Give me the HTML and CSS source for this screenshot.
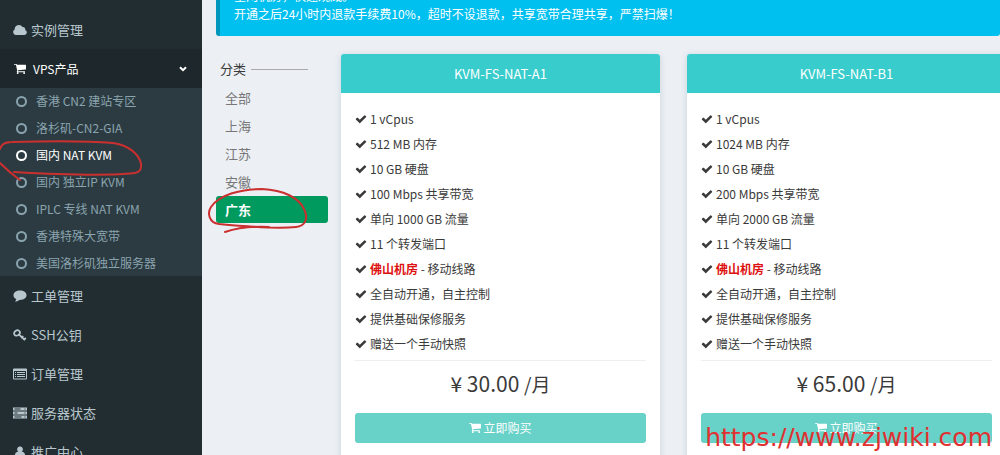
FILE: index.html
```html
<!DOCTYPE html>
<html lang="zh-CN">
<head>
<meta charset="utf-8">
<meta name="viewport" content="width=device-width, initial-scale=1">
<title>VPS产品</title>
<link rel="stylesheet" href="styles.css">
</head>
<body>
<svg class="defs" aria-hidden="true">
  <symbol id="check" viewBox="0 0 1792 1792"><path d="M1671 566q0 40-28 68l-724 724-136 136q-28 28-68 28t-68-28l-136-136-362-362q-28-28-28-68t28-68l136-136q28-28 68-28t68 28l294 295 656-657q28-28 68-28t68 28l136 136q28 28 28 68z"/></symbol>
  <symbol id="cart" viewBox="0 0 1664 1664"><path d="M640 1408q0 52-38 90t-90 38-90-38-38-90 38-90 90-38 90 38 38 90zm896 0q0 52-38 90t-90 38-90-38-38-90 38-90 90-38 90 38 38 90zm128-1088v512q0 24-16 42.500t-41 21.500l-1044 122q13 60 13 70 0 16-24 64h920q26 0 45 19t19 45-19 45-45 19h-1024q-26 0-45-19t-19-45q0-11 8-31.500t16-36 21.500-40 15.500-29.500l-177-823h-204q-26 0-45-19t-19-45 19-45 45-19h256q16 0 28.500 6.500t19.500 15.500 13 24.500 8 26 5.500 29.500 4.500 26h1201q26 0 45 19t19 45z"/></symbol>
  <symbol id="cloud" viewBox="0 0 14 12"><path d="M3 11A3 3 0 0 1 1.700 5.400 4.200 4.200 0 0 1 9.500 3 2.400 2.400 0 0 1 12.200 6 2.600 2.600 0 0 1 11.500 11Z"/></symbol>
  <symbol id="comment" viewBox="0 0 14 12"><path d="M7 .5c3.700 0 6.500 2 6.500 4.700S10.700 9.900 7 9.900h-.8C5 11 3.500 11.500 2 11.600c.8-.7 1.200-1.500 1.300-2.500C1.500 8.200.5 6.800.5 5.200.5 2.500 3.300.5 7 .5Z"/></symbol>
  <symbol id="key" viewBox="0 0 14 12"><g fill="none" stroke="currentColor" stroke-width="1.800"><ellipse cx="4" cy="4" rx="3" ry="2.500" transform="rotate(-35 4 4)"/><path d="M5.800 5.300 12 11.200M8.200 9.200l2-2.200M10.600 11.200l2.200-2.400"/></g></symbol>
  <symbol id="list" viewBox="0 0 14 12"><path fill-rule="evenodd" d="M1 .5h12a1 1 0 0 1 1 1v9a1 1 0 0 1-1 1H1a1 1 0 0 1-1-1v-9a1 1 0 0 1 1-1ZM1 3v7.500h12V3ZM2 4h1v1H2Zm2 0h8v1H4ZM2 6h1v1H2Zm2 0h8v1H4ZM2 8h1v1H2Zm2 0h8v1H4Z"/></symbol>
  <symbol id="server" viewBox="0 0 14 12"><path fill-rule="evenodd" d="M0 .5h14v3H0ZM1.500 1.500v1h6v-1ZM11.500 1.500v1h1v-1ZM0 4.500h14v3H0ZM1.500 5.500v1h3v-1ZM11.500 5.500v1h1v-1ZM0 8.500h14v3H0ZM1.500 9.500v1h7v-1ZM11.500 9.500v1h1v-1Z"/></symbol>
  <symbol id="user" viewBox="0 0 14 14"><path d="M7 .5a3 3.300 0 0 1 2 6c2.700.5 4 2 4 5.500 0 1-.7 1.500-1.500 1.500h-9C1.700 13.500 1 13 1 12c0-3.500 1.300-5 4-5.500a3 3.300 0 0 1 2-6Z"/></symbol>
</svg>

<div class="page">
  <nav class="sidebar" aria-label="主菜单">
    <ul class="menu">
      <li><a class="menu-link" href="#"><svg class="icon"><use href="#cloud"/></svg>实例管理</a></li>
      <li>
        <a class="menu-link open" href="#"><svg class="icon"><use href="#cart"/></svg>VPS产品
          <svg class="caret" viewBox="0 0 8 6"><path d="M1 1.200 4 4.200 7 1.200"/></svg></a>
        <ul class="submenu">
          <li><a class="sub-link" href="#">香港 CN2 建站专区</a></li>
          <li><a class="sub-link" href="#">洛杉矶-CN2-GIA</a></li>
          <li><a class="sub-link current" href="#" aria-current="page">国内 NAT KVM</a></li>
          <li><a class="sub-link" href="#">国内 独立IP KVM</a></li>
          <li><a class="sub-link" href="#">IPLC 专线 NAT KVM</a></li>
          <li><a class="sub-link" href="#">香港特殊大宽带</a></li>
          <li><a class="sub-link" href="#">美国洛杉矶独立服务器</a></li>
        </ul>
      </li>
      <li><a class="menu-link" href="#"><svg class="icon"><use href="#comment"/></svg>工单管理</a></li>
      <li><a class="menu-link" href="#"><svg class="icon"><use href="#key"/></svg>SSH公钥</a></li>
      <li><a class="menu-link" href="#"><svg class="icon"><use href="#list"/></svg>订单管理</a></li>
      <li><a class="menu-link" href="#"><svg class="icon"><use href="#server"/></svg>服务器状态</a></li>
      <li><a class="menu-link" href="#"><svg class="icon"><use href="#user"/></svg>推广中心</a></li>
    </ul>
  </nav>

  <main class="content">
    <div class="callout">
      <p>全网机房，快速观威。</p>
      <p>开通之后24小时内退款手续费10%，超时不设退款，共享宽带合理共享，严禁扫爆！</p>
    </div>
    <div class="columns">
      <aside class="filter">
        <h2 class="filter-title">分类</h2>
        <a class="filter-link" href="#">全部</a>
        <a class="filter-link" href="#">上海</a>
        <a class="filter-link" href="#">江苏</a>
        <a class="filter-link" href="#">安徽</a>
        <a class="filter-link selected" href="#">广东</a>
      </aside>
      <section class="plans">
        <article class="plan">
          <h3 class="plan-name">KVM-FS-NAT-A1</h3>
          <div class="plan-body">
            <ul class="features">
              <li><svg class="tick"><use href="#check"/></svg>1 vCpus</li>
              <li><svg class="tick"><use href="#check"/></svg>512 MB 内存</li>
              <li><svg class="tick"><use href="#check"/></svg>10 GB 硬盘</li>
              <li><svg class="tick"><use href="#check"/></svg>100 Mbps 共享带宽</li>
              <li><svg class="tick"><use href="#check"/></svg>单向 1000 GB 流量</li>
              <li><svg class="tick"><use href="#check"/></svg>11 个转发端口</li>
              <li><svg class="tick"><use href="#check"/></svg><span><strong>佛山机房</strong> - 移动线路</span></li>
              <li><svg class="tick"><use href="#check"/></svg>全自动开通，自主控制</li>
              <li><svg class="tick"><use href="#check"/></svg>提供基础保修服务</li>
              <li><svg class="tick"><use href="#check"/></svg>赠送一个手动快照</li>
            </ul>
            <p class="price">¥ 30.00 <span class="per">/月</span></p>
            <button class="buy" type="button"><svg class="buy-icon"><use href="#cart"/></svg>立即购买</button>
          </div>
        </article>
        <article class="plan">
          <h3 class="plan-name">KVM-FS-NAT-B1</h3>
          <div class="plan-body">
            <ul class="features">
              <li><svg class="tick"><use href="#check"/></svg>1 vCpus</li>
              <li><svg class="tick"><use href="#check"/></svg>1024 MB 内存</li>
              <li><svg class="tick"><use href="#check"/></svg>10 GB 硬盘</li>
              <li><svg class="tick"><use href="#check"/></svg>200 Mbps 共享带宽</li>
              <li><svg class="tick"><use href="#check"/></svg>单向 2000 GB 流量</li>
              <li><svg class="tick"><use href="#check"/></svg>11 个转发端口</li>
              <li><svg class="tick"><use href="#check"/></svg><span><strong>佛山机房</strong> - 移动线路</span></li>
              <li><svg class="tick"><use href="#check"/></svg>全自动开通，自主控制</li>
              <li><svg class="tick"><use href="#check"/></svg>提供基础保修服务</li>
              <li><svg class="tick"><use href="#check"/></svg>赠送一个手动快照</li>
            </ul>
            <p class="price">¥ 65.00 <span class="per">/月</span></p>
            <button class="buy" type="button"><svg class="buy-icon"><use href="#cart"/></svg>立即购买</button>
          </div>
        </article>
      </section>
    </div>
  </main>

  <svg class="marks" viewBox="0 0 340 240" aria-hidden="true">
    <path d="M0 149C1 145 5 142 12 142 45 141 90 141 113 143 127 145 139 153 141 164 142 171 138 173 130 173.500 100 176 50 174 14 172M0 163C6 169 13 175 20 180"/>
    <path d="M219 224C209 223 207 213 211 207 219 195 240 189 262 189 284 190 299 198 304 209 309 219 305 226 296 227 275 229 240 226 219 224M225 232C237 228 250 226 269 227"/>
  </svg>
  <p class="watermark">https://www.zjwiki.com</p>
</div>
</body>
</html>
```
FILE: styles.css
```css
* { box-sizing: border-box; }

body {
  margin: 0;
  background: #ecf0f5;
  color: #3a3a3a;
  font: 12px/18px "Noto Sans CJK SC", "Noto Sans", sans-serif;
}

a { color: inherit; text-decoration: none; }
p, h2, h3, ul { margin: 0; padding: 0; }
ul { list-style: none; }
svg { fill: currentColor; }
.defs { display: none; }

.page {
  position: relative;
  display: flex;
  height: 100vh;
  overflow: hidden;
}

/* Sidebar */
.sidebar {
  flex: 0 0 202px;
  padding-top: 10px;
  background: #222d32;
  color: #b8c7ce;
}

.menu-link {
  display: flex;
  align-items: center;
  gap: 4px;
  height: 39px;
  padding: 0 15px 0 13px;
  font-size: 13px;
}

.menu-link.open {
  gap: 6px;
  background: #1e282c;
  color: #fff;
  font-size: 12px;
}

.icon { width: 14px; height: 12px; }

.caret {
  width: 8px;
  height: 6px;
  margin-left: auto;
  fill: none;
  stroke: currentColor;
  stroke-width: 2;
}

.submenu {
  display: flex;
  flex-direction: column;
  gap: 1px;
  background: #2c3b41;
}

.sub-link {
  display: flex;
  align-items: center;
  gap: 9px;
  height: 26px;
  padding-left: 16px;
  color: #8aa4af;
}

.sub-link::before {
  content: "";
  box-sizing: border-box;
  width: 11px;
  height: 11px;
  border: 2px solid;
  border-radius: 50%;
}

.sub-link.current { color: #fff; }

/* Content */
.content {
  flex: 1;
  min-width: 0;
  padding-left: 14px;
}

.callout {
  margin-top: -26px;
  padding: 13px 24px 13px 14px;
  border-left: 4px solid #0097bc;
  border-radius: 3px;
  background: #00c0ef;
  color: #fff;
}

.columns {
  display: flex;
  gap: 13px;
  padding-top: 18px;
}

.filter {
  flex: 0 0 112px;
  padding-top: 6px;
}

.filter-title {
  display: flex;
  align-items: center;
  gap: 5px;
  margin-bottom: 6px;
  padding: 0 20px 0 4px;
  font-size: 13px;
  font-weight: 400;
}

.filter-title::after {
  content: "";
  flex: 1;
  height: 1px;
  background: #aaa;
}

.filter-link {
  display: block;
  margin-bottom: 1px;
  padding: 0 9px;
  border-radius: 3px;
  color: #777;
  font-size: 13px;
  line-height: 27px;
}

.filter-link.selected {
  background: #009a5e;
  color: #fff;
  font-weight: 700;
}

.plans {
  flex: 1;
  display: grid;
  grid-template-columns: 1fr 1fr;
  gap: 27px;
  margin-right: -6px;
}

.plan {
  border-radius: 3px;
  background: #fff;
  box-shadow: 0 1px 6px rgba(60, 80, 110, 0.2);
}

.plan-name {
  border-radius: 3px 3px 0 0;
  background: #39cccc;
  color: #fff;
  font-size: 13px;
  font-weight: 400;
  line-height: 39px;
  text-align: center;
}

.plan-body { padding: 13px 14px 24px; }

.features {
  padding-bottom: 4px;
  border-bottom: 1px solid #eee;
}

.features li {
  display: flex;
  align-items: center;
  gap: 3px;
  height: 25px;
}

.features strong { color: #dd1111; }
.tick { width: 12px; height: 12px; }

.price {
  padding: 8px 0 15px;
  font-size: 21px;
  line-height: 28px;
  text-align: center;
}

.per { font-size: 19px; }

.buy {
  display: flex;
  align-items: center;
  justify-content: center;
  gap: 2px;
  width: 100%;
  height: 30px;
  padding: 0;
  border: 0;
  border-radius: 3px;
  background: #68d1c8;
  color: #fff;
  font: 12px/18px "Noto Sans CJK SC", sans-serif;
}

.buy-icon { width: 12px; height: 12px; }

/* Overlays */
.marks {
  position: absolute;
  top: 0;
  left: 0;
  width: 340px;
  height: 240px;
  fill: none;
  stroke: #c9302f;
  stroke-width: 2;
  stroke-linecap: round;
  pointer-events: none;
}

.watermark {
  position: absolute;
  right: 8px;
  bottom: 3px;
  color: #e03030;
  font: 25px/28px "DejaVu Sans", sans-serif;
}
```
